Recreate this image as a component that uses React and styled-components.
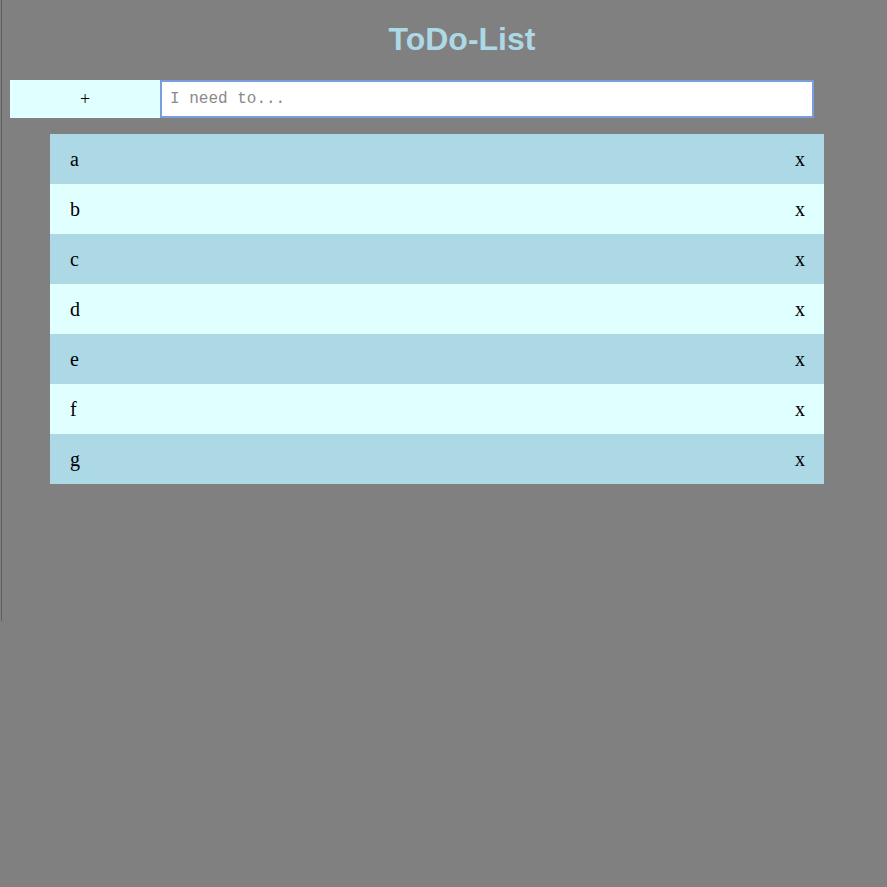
import React, { useState } from "react";
import styled, { createGlobalStyle } from "styled-components";

const Global = createGlobalStyle`
  html, body {
    margin: 0;
    padding: 0;
    background: #808080;
  }
  body {
    font-family: "Liberation Serif", "Times New Roman", serif;
  }
`;

const Page = styled.div`
  margin-left: 1px;
  border-left: 1px solid #5e5e5e;
  min-height: 621px;
  box-sizing: border-box;
  display: flex;
  flex-direction: column;
`;

const Title = styled.h1`
  margin: 21px 0 0 35px;
  font-family: "Liberation Sans", Arial, sans-serif;
  font-weight: bold;
  font-size: 32px;
  line-height: 37px;
  color: #add8e6;
  text-align: center;
`;

const Form = styled.form`
  display: flex;
  margin: 22px 0 0 8px;
  height: 38px;
`;

const AddButton = styled.button`
  width: 150px;
  height: 38px;
  border: none;
  margin: 0;
  padding: 0;
  background: #e0ffff;
  color: #000;
  font-family: "Liberation Serif", "Times New Roman", serif;
  font-size: 18px;
  cursor: pointer;
`;

const Input = styled.input`
  width: 654px;
  height: 38px;
  box-sizing: border-box;
  margin: 0;
  border: 2px solid #7a9de0;
  border-radius: 1px;
  padding: 0 8px;
  background: #fff;
  font-family: "Liberation Mono", "Courier New", monospace;
  font-size: 16px;
  outline: none;
  &::placeholder {
    color: #8a8a8a;
  }
`;

const List = styled.ul`
  list-style: none;
  margin: 16px 0 0 48px;
  padding: 0;
  width: 774px;
`;

const Row = styled.li`
  display: flex;
  align-items: center;
  justify-content: space-between;
  height: 50px;
  padding: 1px 19px 0 20px;
  box-sizing: border-box;
  background: ${(p) => (p.$odd ? "#e0ffff" : "#add8e6")};
  font-family: "Liberation Serif", "Times New Roman", serif;
  font-size: 20px;
  color: #000;
`;

const Remove = styled.span`
  cursor: pointer;
`;

export default function App() {
  const [items, setItems] = useState(["a", "b", "c", "d", "e", "f", "g"]);
  const [text, setText] = useState("");
  return (
    <Page>
      <Global />
      <Title>ToDo-List</Title>
      <Form
        onSubmit={(e) => {
          e.preventDefault();
          if (text.trim()) {
            setItems([...items, text.trim()]);
            setText("");
          }
        }}
      >
        <AddButton type="submit">+</AddButton>
        <Input
          autoFocus
          placeholder="I need to..."
          value={text}
          onChange={(e) => setText(e.target.value)}
        />
      </Form>
      <List>
        {items.map((it, i) => (
          <Row key={i} $odd={i % 2 === 1}>
            <span>{it}</span>
            <Remove onClick={() => setItems(items.filter((_, j) => j !== i))}>x</Remove>
          </Row>
        ))}
      </List>
    </Page>
  );
}
